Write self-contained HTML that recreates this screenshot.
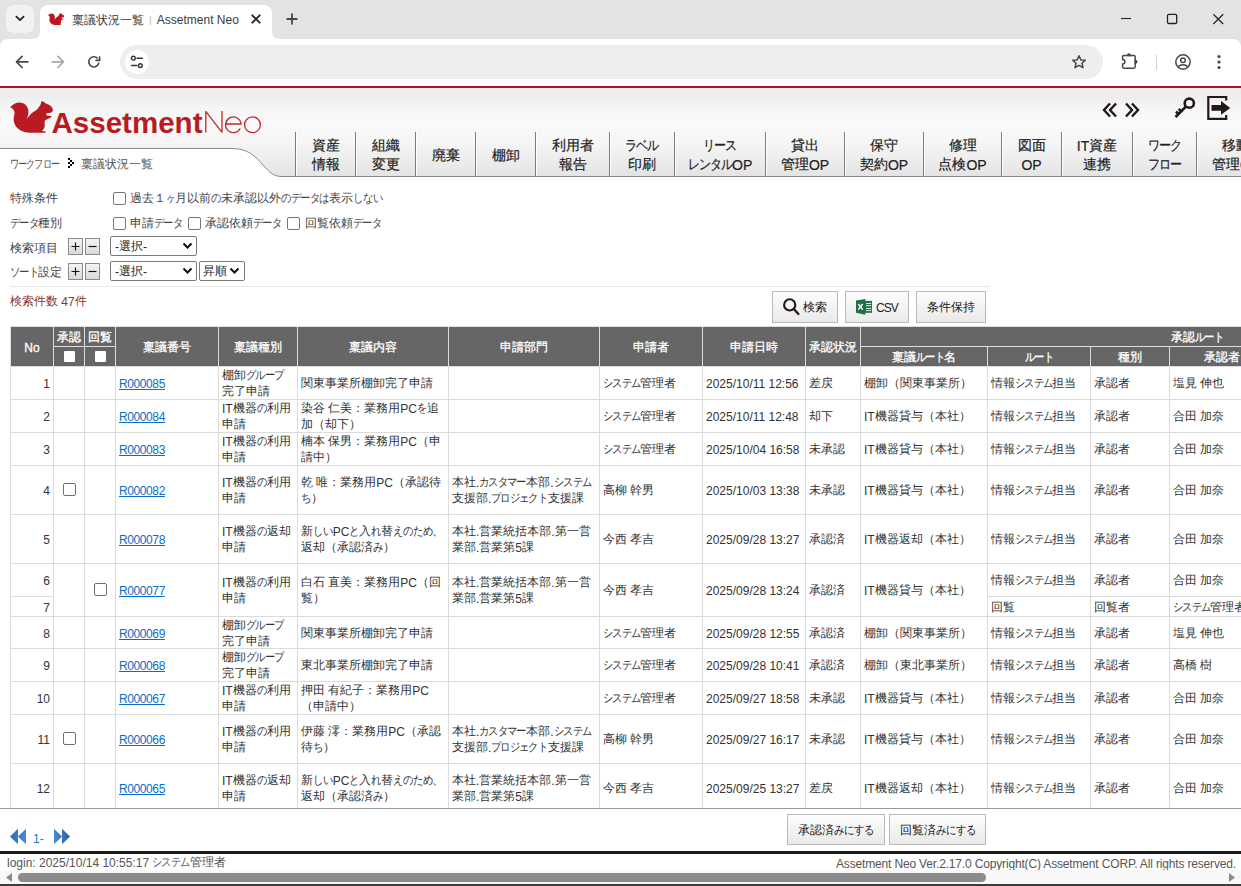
<!DOCTYPE html>
<html lang="ja"><head><meta charset="utf-8"><title>稟議状況一覧 | Assetment Neo</title>
<style>
html,body{margin:0;padding:0;width:1241px;height:886px;overflow:hidden;background:#fff;font-family:'Liberation Sans', sans-serif;}
.b,.t,.s,.clip{position:absolute;}
.clip{overflow:hidden;}
.t{white-space:nowrap;}
.a{position:relative;top:1px;}
.k{display:inline-block;transform-origin:0 50%;}
</style></head><body>
<div class="b" style="left:0px;top:0px;width:1241px;height:47px;background:#e3e3e3"></div>
<div class="b" style="left:6px;top:5px;width:28px;height:28px;background:#f2f2f2;border-radius:8px"></div>
<svg class="s" style="left:6px;top:5px;" width="28" height="28" viewBox="0 0 28 28"><path d="M10.4 11.6 L14 15.2 L17.6 11.6" fill="none" stroke="#1f1f1f" stroke-width="1.7" stroke-linecap="round" stroke-linejoin="round"/></svg>
<div class="b" style="left:0px;top:39px;width:1241px;height:47px;background:#fff;border-radius:8px 8px 0 0"></div>
<div class="b" style="left:40px;top:5px;width:232px;height:40px;background:#fff;border-radius:8px 8px 0 0"></div>
<svg class="s" style="left:32px;top:31px;" width="8" height="8" viewBox="0 0 8 8"><path d="M0 8 Q8 8 8 0 L8 8 Z" fill="#fff"/></svg>
<svg class="s" style="left:272px;top:31px;" width="8" height="8" viewBox="0 0 8 8"><path d="M8 8 Q0 8 0 0 L0 8 Z" fill="#fff"/></svg>
<svg class="s" style="left:46px;top:10px;" width="20" height="18" viewBox="0 0 20 18"><g transform="translate(2,3) scale(0.375) translate(-10,-101)"><path d="M10.1 107.3 C13 104.5 16 102.5 19.5 102.5 C24 102.5 27.5 105.5 28.3 110 C29 114 27.5 117 26.6 119.5 C28.3 117 30 115 31.3 113.6 C33.5 111.5 35.5 111 37 109.5 C38.5 108 39.5 106 40.6 104.5 L41.4 101.2 L43.8 101.8 L45.7 103.4 C48.5 104 51.5 105.8 52.6 108.5 C53.3 110.5 52.5 112.4 50.6 112.7 L46.3 113.2 L46.6 115.6 L51.9 116.2 C51 117.8 48 119 45.3 119.9 C44.3 121.5 44.5 123.5 44.8 125.3 C45 127.5 43.5 129.5 42.1 130.7 L45.7 131.8 L45.7 132.8 L29.5 132.8 C24 132.6 17.5 130 15 125 C13 121 13.5 117 14.5 114 C15 111 13.5 109 10.1 107.3 Z" fill="#c0151f"/></g></svg>
<div class="t" style="left:72px;top:12px;font-size:12px;line-height:16px;color:#3b3b3b;">稟議状況一覧 <span style="color:#c4c4c4;margin:0 1.5px;display:inline-block;transform:scaleY(.8)">|</span> Assetment Neo</div>
<svg class="s" style="left:250px;top:13px;" width="12" height="12" viewBox="0 0 12 12"><path d="M2.3 2.3 L9.7 9.7 M9.7 2.3 L2.3 9.7" stroke="#262626" stroke-width="1.9" stroke-linecap="round"/></svg>
<svg class="s" style="left:285px;top:12px;" width="14" height="14" viewBox="0 0 14 14"><path d="M7 2.2 V11.8 M2.2 7 H11.8" stroke="#474747" stroke-width="1.8" stroke-linecap="round"/></svg>
<svg class="s" style="left:1120px;top:12px;" width="13" height="13" viewBox="0 0 13 13"><path d="M1 6.5 H11" stroke="#222" stroke-width="1.1"/></svg>
<svg class="s" style="left:1166px;top:12px;" width="13" height="13" viewBox="0 0 13 13"><rect x="1.5" y="2.3" width="9.2" height="9.2" rx="1.3" fill="none" stroke="#222" stroke-width="1.3"/></svg>
<svg class="s" style="left:1212px;top:12px;" width="13" height="13" viewBox="0 0 13 13"><path d="M1.3 2.2 L11.2 12 M11.2 2.2 L1.3 12" stroke="#222" stroke-width="1.2"/></svg>
<svg class="s" style="left:14px;top:54px;" width="16" height="16" viewBox="0 0 16 16"><path d="M13.8 7.9 H2.6 M8.1 2.3 L2.5 7.9 L8.1 13.5" fill="none" stroke="#474747" stroke-width="1.7" stroke-linecap="round" stroke-linejoin="round"/></svg>
<svg class="s" style="left:50px;top:54px;" width="16" height="16" viewBox="0 0 16 16"><path d="M2.2 7.9 H13.4 M7.9 2.3 L13.5 7.9 L7.9 13.5" fill="none" stroke="#a9a9a9" stroke-width="1.7" stroke-linecap="round" stroke-linejoin="round"/></svg>
<svg class="s" style="left:86px;top:54px;" width="16" height="16" viewBox="0 0 16 16"><path d="M12.9 8.6 A5.1 5.1 0 1 1 11.7 4.5" fill="none" stroke="#474747" stroke-width="1.6"/><path d="M13.6 2.2 V6.4 H9.4" fill="none" stroke="#474747" stroke-width="1.6" stroke-linejoin="miter"/></svg>
<div class="b" style="left:120px;top:45px;width:983px;height:34px;background:#efedee;border-radius:17px"></div>
<div class="b" style="left:125px;top:50px;width:24px;height:24px;background:#fff;border-radius:12px"></div>
<svg class="s" style="left:125px;top:50px;" width="24" height="24" viewBox="0 0 24 24"><circle cx="8.3" cy="8.2" r="1.9" fill="none" stroke="#333" stroke-width="1.4"/><path d="M12 8.2 H17.3" stroke="#333" stroke-width="1.5" stroke-linecap="round"/><circle cx="15.3" cy="15.6" r="1.9" fill="none" stroke="#333" stroke-width="1.4"/><path d="M6.5 15.6 H11.7" stroke="#333" stroke-width="1.5" stroke-linecap="round"/></svg>
<svg class="s" style="left:1071px;top:54px;" width="16" height="16" viewBox="0 0 16 16"><path d="M8 1.8 L9.9 5.9 L14.3 6.3 L11 9.3 L12 13.7 L8 11.4 L4 13.7 L5 9.3 L1.7 6.3 L6.1 5.9 Z" fill="none" stroke="#474747" stroke-width="1.5" stroke-linejoin="round"/></svg>
<svg class="s" style="left:1120px;top:53px;" width="18" height="18" viewBox="0 0 18 18"><path d="M2.6 6.5 V4 Q2.6 2.6 4 2.6 H13.8 Q15.2 2.6 15.2 4 V13.8 Q15.2 15.2 13.8 15.2 H4 Q2.6 15.2 2.6 13.8 V11.1 A2.3 2.3 0 0 0 2.6 6.5 Z" fill="none" stroke="#474747" stroke-width="1.5"/><path d="M6.9 3.2 V2.4 A2.1 2.1 0 0 1 11.1 2.4 V3.2 Z M14.6 6.7 H15.4 A2.1 2.1 0 0 1 15.4 10.9 H14.6 Z" fill="#474747"/></svg>
<div class="b" style="left:1156px;top:55px;width:1px;height:15px;background:#d0d0d0"></div>
<svg class="s" style="left:1174px;top:53px;" width="18" height="18" viewBox="0 0 18 18"><circle cx="9" cy="9" r="7.2" fill="none" stroke="#474747" stroke-width="1.5"/><circle cx="9" cy="7.2" r="2.3" fill="none" stroke="#474747" stroke-width="1.5"/><path d="M4.3 13.8 C6.5 11 11.5 11 13.7 13.8" fill="none" stroke="#474747" stroke-width="1.5"/></svg>
<svg class="s" style="left:1215px;top:53px;" width="8" height="18" viewBox="0 0 8 18"><circle cx="4" cy="3.5" r="1.6" fill="#474747"/><circle cx="4" cy="9" r="1.6" fill="#474747"/><circle cx="4" cy="14.5" r="1.6" fill="#474747"/></svg>
<div class="b" style="left:0px;top:86px;width:1241px;height:2px;background:#b3141d"></div>
<div class="b" style="left:0px;top:88px;width:1241px;height:89px;background:linear-gradient(#f0f1ef 0px,#ebebeb 2px,#f5f5f5 20px,#fafafa 36px,#f5f5f5 56px,#eaeaea 78px,#e3e3e3 88px)"></div>
<svg class="s" style="left:0px;top:140px;" width="300" height="40" viewBox="0 0 300 40"><path d="M0 8.5 L232 8.5 C248 8.5 255 16 263 25 C270 33 274 36.5 282 36.5 L300 36.5 L300 40 L0 40 Z" fill="#fff"/><path d="M0 8.5 L232 8.5 C248 8.5 255 16 263 25 C270 33 274 36.5 282 36.5 L300 36.5" fill="none" stroke="#8a8a8a" stroke-width="1"/></svg>
<div class="b" style="left:280px;top:176px;width:961px;height:1px;background:#8a8a8a"></div>
<svg class="s" style="left:0px;top:95px;" width="270" height="45" viewBox="0 0 270 45"><g transform="translate(0,-95)"><path d="M10.1 107.3 C13 104.5 16 102.5 19.5 102.5 C24 102.5 27.5 105.5 28.3 110 C29 114 27.5 117 26.6 119.5 C28.3 117 30 115 31.3 113.6 C33.5 111.5 35.5 111 37 109.5 C38.5 108 39.5 106 40.6 104.5 L41.4 101.2 L43.8 101.8 L45.7 103.4 C48.5 104 51.5 105.8 52.6 108.5 C53.3 110.5 52.5 112.4 50.6 112.7 L46.3 113.2 L46.6 115.6 L51.9 116.2 C51 117.8 48 119 45.3 119.9 C44.3 121.5 44.5 123.5 44.8 125.3 C45 127.5 43.5 129.5 42.1 130.7 L45.7 131.8 L45.7 132.8 L29.5 132.8 C24 132.6 17.5 130 15 125 C13 121 13.5 117 14.5 114 C15 111 13.5 109 10.1 107.3 Z" fill="#b81c22"/></g>
<text x="51.5" y="37.6" font-family="Liberation Sans" font-weight="bold" font-size="29.5" fill="#b81c22" textLength="151" lengthAdjust="spacingAndGlyphs">Assetment</text>
<path d="M205.8 37.6 V16.3 L222 37.4 V16" fill="none" stroke="#c0282e" stroke-width="1.3" stroke-linejoin="bevel"/>
<path d="M225.7 29 H241.1 A7.8 7.8 0 1 0 240.2 33.5" fill="none" stroke="#c0282e" stroke-width="1.3"/>
<circle cx="252.5" cy="29.8" r="7.9" fill="none" stroke="#c0282e" stroke-width="1.3"/></svg>
<svg class="s" style="left:1100px;top:100px;" width="44" height="22" viewBox="0 0 44 22"><path d="M10 3.5 L4 10 L10 16.5 M16 3.5 L10 10 L16 16.5" fill="none" stroke="#231815" stroke-width="2.4"/><path d="M26 3.5 L32 10 L26 16.5 M32 3.5 L38 10 L32 16.5" fill="none" stroke="#231815" stroke-width="2.4"/></svg>
<svg class="s" style="left:1172px;top:96px;" width="26" height="24" viewBox="0 0 26 24"><circle cx="17.3" cy="7.2" r="4.6" fill="none" stroke="#231815" stroke-width="2.6"/><path d="M14 10.5 L3.5 21 M6.5 18 L4 15.5 M9.2 15.3 L6.7 12.8" fill="none" stroke="#231815" stroke-width="2.6"/></svg>
<svg class="s" style="left:1204px;top:94px;" width="30" height="28" viewBox="0 0 30 28"><path d="M22.2 6.5 V3 H4.3 V24.8 H22.2 V21" fill="none" stroke="#231815" stroke-width="2.2"/><path d="M7.5 11 H17 V7 L26.3 13.9 L17 20.8 V16.8 H7.5 Z" fill="#231815"/></svg>
<div class="b" style="left:295px;top:132px;width:1px;height:44px;background:#7c7c7c"></div>
<div class="b" style="left:296px;top:132px;width:1px;height:44px;background:#fff"></div>
<div class="t" style="left:265.5px;width:120px;text-align:center;top:136.3px;font-size:14px;line-height:18px;color:#222;-webkit-text-stroke:0.2px #222;">資産</div>
<div class="t" style="left:265.5px;width:120px;text-align:center;top:155.3px;font-size:14px;line-height:18px;color:#222;-webkit-text-stroke:0.2px #222;">情報</div>
<div class="b" style="left:355px;top:132px;width:1px;height:44px;background:#7c7c7c"></div>
<div class="b" style="left:356px;top:132px;width:1px;height:44px;background:#fff"></div>
<div class="t" style="left:325.5px;width:120px;text-align:center;top:136.3px;font-size:14px;line-height:18px;color:#222;-webkit-text-stroke:0.2px #222;">組織</div>
<div class="t" style="left:325.5px;width:120px;text-align:center;top:155.3px;font-size:14px;line-height:18px;color:#222;-webkit-text-stroke:0.2px #222;">変更</div>
<div class="b" style="left:415px;top:132px;width:1px;height:44px;background:#7c7c7c"></div>
<div class="b" style="left:416px;top:132px;width:1px;height:44px;background:#fff"></div>
<div class="t" style="left:385.5px;width:120px;text-align:center;top:146.3px;font-size:14px;line-height:18px;color:#222;-webkit-text-stroke:0.2px #222;">廃棄</div>
<div class="b" style="left:475px;top:132px;width:1px;height:44px;background:#7c7c7c"></div>
<div class="b" style="left:476px;top:132px;width:1px;height:44px;background:#fff"></div>
<div class="t" style="left:445.5px;width:120px;text-align:center;top:146.3px;font-size:14px;line-height:18px;color:#222;-webkit-text-stroke:0.2px #222;">棚卸</div>
<div class="b" style="left:535px;top:132px;width:1px;height:44px;background:#7c7c7c"></div>
<div class="b" style="left:536px;top:132px;width:1px;height:44px;background:#fff"></div>
<div class="t" style="left:512.5px;width:120px;text-align:center;top:136.3px;font-size:14px;line-height:18px;color:#222;-webkit-text-stroke:0.2px #222;">利用者</div>
<div class="t" style="left:512.5px;width:120px;text-align:center;top:155.3px;font-size:14px;line-height:18px;color:#222;-webkit-text-stroke:0.2px #222;">報告</div>
<div class="b" style="left:609px;top:132px;width:1px;height:44px;background:#7c7c7c"></div>
<div class="b" style="left:610px;top:132px;width:1px;height:44px;background:#fff"></div>
<div class="t" style="left:582.0px;width:120px;text-align:center;top:136.3px;font-size:14px;line-height:18px;color:#222;-webkit-text-stroke:0.2px #222;"><span class="k" style="transform:scaleX(0.860);letter-spacing:-0.081em;margin-right:-0.386em">ラベル</span></div>
<div class="t" style="left:582.0px;width:120px;text-align:center;top:155.3px;font-size:14px;line-height:18px;color:#222;-webkit-text-stroke:0.2px #222;">印刷</div>
<div class="b" style="left:674px;top:132px;width:1px;height:44px;background:#7c7c7c"></div>
<div class="b" style="left:675px;top:132px;width:1px;height:44px;background:#fff"></div>
<div class="t" style="left:660.0px;width:120px;text-align:center;top:136.3px;font-size:14px;line-height:18px;color:#222;-webkit-text-stroke:0.2px #222;"><span class="k" style="transform:scaleX(0.860);letter-spacing:-0.081em;margin-right:-0.386em">リース</span></div>
<div class="t" style="left:660.0px;width:120px;text-align:center;top:155.3px;font-size:14px;line-height:18px;color:#222;-webkit-text-stroke:0.2px #222;"><span class="k" style="transform:scaleX(0.860);letter-spacing:-0.081em;margin-right:-0.514em">レンタル</span><span class="a">OP</span></div>
<div class="b" style="left:765px;top:132px;width:1px;height:44px;background:#7c7c7c"></div>
<div class="b" style="left:766px;top:132px;width:1px;height:44px;background:#fff"></div>
<div class="t" style="left:745.0px;width:120px;text-align:center;top:136.3px;font-size:14px;line-height:18px;color:#222;-webkit-text-stroke:0.2px #222;">貸出</div>
<div class="t" style="left:745.0px;width:120px;text-align:center;top:155.3px;font-size:14px;line-height:18px;color:#222;-webkit-text-stroke:0.2px #222;">管理<span class="a">OP</span></div>
<div class="b" style="left:844px;top:132px;width:1px;height:44px;background:#7c7c7c"></div>
<div class="b" style="left:845px;top:132px;width:1px;height:44px;background:#fff"></div>
<div class="t" style="left:824.0px;width:120px;text-align:center;top:136.3px;font-size:14px;line-height:18px;color:#222;-webkit-text-stroke:0.2px #222;">保守</div>
<div class="t" style="left:824.0px;width:120px;text-align:center;top:155.3px;font-size:14px;line-height:18px;color:#222;-webkit-text-stroke:0.2px #222;">契約<span class="a">OP</span></div>
<div class="b" style="left:923px;top:132px;width:1px;height:44px;background:#7c7c7c"></div>
<div class="b" style="left:924px;top:132px;width:1px;height:44px;background:#fff"></div>
<div class="t" style="left:902.5px;width:120px;text-align:center;top:136.3px;font-size:14px;line-height:18px;color:#222;-webkit-text-stroke:0.2px #222;">修理</div>
<div class="t" style="left:902.5px;width:120px;text-align:center;top:155.3px;font-size:14px;line-height:18px;color:#222;-webkit-text-stroke:0.2px #222;">点検<span class="a">OP</span></div>
<div class="b" style="left:1001px;top:132px;width:1px;height:44px;background:#7c7c7c"></div>
<div class="b" style="left:1002px;top:132px;width:1px;height:44px;background:#fff"></div>
<div class="t" style="left:971.5px;width:120px;text-align:center;top:136.3px;font-size:14px;line-height:18px;color:#222;-webkit-text-stroke:0.2px #222;">図面</div>
<div class="t" style="left:971.5px;width:120px;text-align:center;top:155.3px;font-size:14px;line-height:18px;color:#222;-webkit-text-stroke:0.2px #222;"><span class="a">OP</span></div>
<div class="b" style="left:1061px;top:132px;width:1px;height:44px;background:#7c7c7c"></div>
<div class="b" style="left:1062px;top:132px;width:1px;height:44px;background:#fff"></div>
<div class="t" style="left:1037.0px;width:120px;text-align:center;top:136.3px;font-size:14px;line-height:18px;color:#222;-webkit-text-stroke:0.2px #222;"><span class="a">IT</span>資産</div>
<div class="t" style="left:1037.0px;width:120px;text-align:center;top:155.3px;font-size:14px;line-height:18px;color:#222;-webkit-text-stroke:0.2px #222;">連携</div>
<div class="b" style="left:1132px;top:132px;width:1px;height:44px;background:#7c7c7c"></div>
<div class="b" style="left:1133px;top:132px;width:1px;height:44px;background:#fff"></div>
<div class="t" style="left:1104.5px;width:120px;text-align:center;top:136.3px;font-size:14px;line-height:18px;color:#222;-webkit-text-stroke:0.2px #222;"><span class="k" style="transform:scaleX(0.860);letter-spacing:-0.081em;margin-right:-0.386em">ワーク</span></div>
<div class="t" style="left:1104.5px;width:120px;text-align:center;top:155.3px;font-size:14px;line-height:18px;color:#222;-webkit-text-stroke:0.2px #222;"><span class="k" style="transform:scaleX(0.860);letter-spacing:-0.081em;margin-right:-0.386em">フロー</span></div>
<div class="b" style="left:1196px;top:132px;width:1px;height:44px;background:#7c7c7c"></div>
<div class="b" style="left:1197px;top:132px;width:1px;height:44px;background:#fff"></div>
<div class="t" style="left:1176.0px;width:120px;text-align:center;top:136.3px;font-size:14px;line-height:18px;color:#222;-webkit-text-stroke:0.2px #222;">移動</div>
<div class="t" style="left:1176.0px;width:120px;text-align:center;top:155.3px;font-size:14px;line-height:18px;color:#222;-webkit-text-stroke:0.2px #222;">管理<span class="a">OP</span></div>
<div class="t" style="left:10px;top:155.8px;font-size:12px;line-height:16px;color:#555;"><span class="k" style="transform:scaleX(0.760);letter-spacing:-0.105em;margin-right:-1.288em">ワークフロー</span></div>
<svg class="s" style="left:68px;top:158px;" width="8" height="12" viewBox="0 0 8 12"><g fill="#000"><rect x="0" y="0" width="2" height="2"/><rect x="2" y="2" width="2" height="2"/><rect x="0" y="4" width="2" height="2"/><rect x="4" y="4" width="2" height="2"/><rect x="2" y="6" width="2" height="2"/><rect x="0" y="8" width="2" height="2"/></g></svg>
<div class="t" style="left:81px;top:155.8px;font-size:12px;line-height:16px;color:#555;">稟議状況一覧</div>
<div class="t" style="left:10px;top:190.3px;font-size:12px;line-height:16px;color:#444;">特殊条件</div>
<div class="b" style="left:113px;top:192px;width:11px;height:11px;background:#fff;border:1px solid #767676;border-radius:2px"></div>
<div class="t" style="left:130px;top:190.3px;font-size:12px;line-height:16px;color:#444;">過去１<span class="k" style="transform:scaleX(0.860);letter-spacing:-0.093em;margin-right:-0.127em">ヶ</span>月以前<span class="k" style="transform:scaleX(0.860);letter-spacing:-0.047em;margin-right:-0.133em">の</span>未承認以外<span class="k" style="transform:scaleX(0.860);letter-spacing:-0.047em;margin-right:-0.133em">の</span><span class="k" style="transform:scaleX(0.860);letter-spacing:-0.093em;margin-right:-0.381em">データ</span><span class="k" style="transform:scaleX(0.860);letter-spacing:-0.047em;margin-right:-0.133em">は</span>表示<span class="k" style="transform:scaleX(0.860);letter-spacing:-0.047em;margin-right:-0.400em">しない</span></div>
<div class="t" style="left:10px;top:215.3px;font-size:12px;line-height:16px;color:#444;"><span class="k" style="transform:scaleX(0.860);letter-spacing:-0.093em;margin-right:-0.381em">データ</span>種別</div>
<div class="b" style="left:113px;top:217px;width:11px;height:11px;background:#fff;border:1px solid #767676;border-radius:2px"></div>
<div class="t" style="left:130px;top:215.3px;font-size:12px;line-height:16px;color:#444;">申請<span class="k" style="transform:scaleX(0.860);letter-spacing:-0.093em;margin-right:-0.381em">データ</span></div>
<div class="b" style="left:188px;top:217px;width:11px;height:11px;background:#fff;border:1px solid #767676;border-radius:2px"></div>
<div class="t" style="left:205px;top:215.3px;font-size:12px;line-height:16px;color:#444;">承認依頼<span class="k" style="transform:scaleX(0.860);letter-spacing:-0.093em;margin-right:-0.381em">データ</span></div>
<div class="b" style="left:287px;top:217px;width:11px;height:11px;background:#fff;border:1px solid #767676;border-radius:2px"></div>
<div class="t" style="left:305px;top:215.3px;font-size:12px;line-height:16px;color:#444;">回覧依頼<span class="k" style="transform:scaleX(0.860);letter-spacing:-0.093em;margin-right:-0.381em">データ</span></div>
<div class="t" style="left:10px;top:240.3px;font-size:12px;line-height:16px;color:#444;">検索項目</div>
<div class="b" style="left:68px;top:238px;width:13px;height:15px;background:linear-gradient(#f4f4f4,#d9d9d9);border:1px solid #8a8a8a"></div>
<svg class="s" style="left:68px;top:238px;" width="15" height="17" viewBox="0 0 15 17"><path d="M7.5 4.5 V12.5 M3.5 8.5 H11.5" stroke="#111" stroke-width="1.15"/></svg>
<div class="b" style="left:85px;top:238px;width:13px;height:15px;background:linear-gradient(#f4f4f4,#d9d9d9);border:1px solid #8a8a8a"></div>
<svg class="s" style="left:85px;top:238px;" width="15" height="17" viewBox="0 0 15 17"><path d="M3.5 8.5 H11.5" stroke="#111" stroke-width="1.15"/></svg>
<div class="b" style="left:110px;top:236px;width:85px;height:18px;background:#fff;border:1px solid #7a7a7a;border-radius:2px"></div>
<div class="t" style="left:115px;top:238.3px;font-size:12px;line-height:16px;color:#222;"><span class="a">-</span>選択<span class="a">-</span></div>
<svg class="s" style="left:182px;top:241px;" width="11" height="10" viewBox="0 0 11 10"><path d="M1.5 2.5 L5.5 6.5 L9.5 2.5" fill="none" stroke="#111" stroke-width="2"/></svg>
<div class="t" style="left:10px;top:264.3px;font-size:12px;line-height:16px;color:#444;"><span class="k" style="transform:scaleX(0.860);letter-spacing:-0.093em;margin-right:-0.381em">ソート</span>設定</div>
<div class="b" style="left:68px;top:263px;width:13px;height:15px;background:linear-gradient(#f4f4f4,#d9d9d9);border:1px solid #8a8a8a"></div>
<svg class="s" style="left:68px;top:263px;" width="15" height="17" viewBox="0 0 15 17"><path d="M7.5 4.5 V12.5 M3.5 8.5 H11.5" stroke="#111" stroke-width="1.15"/></svg>
<div class="b" style="left:85px;top:263px;width:13px;height:15px;background:linear-gradient(#f4f4f4,#d9d9d9);border:1px solid #8a8a8a"></div>
<svg class="s" style="left:85px;top:263px;" width="15" height="17" viewBox="0 0 15 17"><path d="M3.5 8.5 H11.5" stroke="#111" stroke-width="1.15"/></svg>
<div class="b" style="left:110px;top:261px;width:85px;height:18px;background:#fff;border:1px solid #7a7a7a;border-radius:2px"></div>
<div class="t" style="left:115px;top:263.3px;font-size:12px;line-height:16px;color:#222;"><span class="a">-</span>選択<span class="a">-</span></div>
<svg class="s" style="left:182px;top:266px;" width="11" height="10" viewBox="0 0 11 10"><path d="M1.5 2.5 L5.5 6.5 L9.5 2.5" fill="none" stroke="#111" stroke-width="2"/></svg>
<div class="b" style="left:199px;top:261px;width:44px;height:18px;background:#fff;border:1px solid #7a7a7a;border-radius:2px"></div>
<div class="t" style="left:203px;top:263.3px;font-size:12px;line-height:16px;color:#222;">昇順</div>
<svg class="s" style="left:229px;top:266px;" width="11" height="10" viewBox="0 0 11 10"><path d="M1.5 2.5 L5.5 6.5 L9.5 2.5" fill="none" stroke="#111" stroke-width="2"/></svg>
<div class="b" style="left:10px;top:286px;width:980px;height:1px;background:#e8e8e8"></div>
<div class="t" style="left:10px;top:293.3px;font-size:12px;line-height:16px;color:#8c3434;">検索件数 <span class="a">47</span>件</div>
<div class="b" style="left:772px;top:291px;width:64px;height:30px;background:linear-gradient(#fdfdfd,#e9e9e9);border:1px solid #b9b9b9"></div>
<svg class="s" style="left:780px;top:296px;" width="22" height="22" viewBox="0 0 22 22"><circle cx="9.7" cy="8.9" r="5.6" fill="none" stroke="#231815" stroke-width="2.1"/><path d="M13.8 13 L18.4 18" stroke="#231815" stroke-width="2.3" stroke-linecap="round"/></svg>
<div class="t" style="left:803px;top:299.3px;font-size:12px;line-height:16px;color:#222;">検索</div>
<div class="b" style="left:845px;top:291px;width:62px;height:30px;background:linear-gradient(#fdfdfd,#e9e9e9);border:1px solid #b9b9b9"></div>
<svg class="s" style="left:855px;top:298px;" width="18" height="18" viewBox="0 0 18 18"><path d="M1 2.5 L10.4 1.1 V16.8 L1 14.8 Z" fill="#1e7145"/><rect x="10" y="2.9" width="7" height="11.9" fill="#1e7145"/><path d="M11 5.4 H16.2 M11 7.6 H16.2 M11 10.4 H16.2 M11 12.6 H16.2" stroke="#fff" stroke-width="0.9"/><path d="M3.3 6 L7.7 11.6 M7.7 6 L3.3 11.6" stroke="#fff" stroke-width="1.5"/></svg>
<div class="t" style="left:876px;top:298.8px;font-size:12px;line-height:16px;color:#222;letter-spacing:-0.9px;"><span class="a">CSV</span></div>
<div class="b" style="left:916px;top:291px;width:68px;height:30px;background:linear-gradient(#fdfdfd,#e9e9e9);border:1px solid #b9b9b9"></div>
<div class="t" style="left:916.0px;width:70px;text-align:center;top:299.3px;font-size:12px;line-height:16px;color:#222;">条件保持</div>
<div class="clip" style="left:0;top:326px;width:1241px;height:482px">
<div class="b" style="left:11px;top:1px;width:1241px;height:39px;background:#666"></div>
<div class="b" style="left:10px;top:0px;width:1241px;height:1px;background:#dcdcdc"></div>
<div class="b" style="left:10px;top:40px;width:1241px;height:1px;background:#dcdcdc"></div>
<div class="b" style="left:53px;top:20px;width:62px;height:1px;background:#dcdcdc"></div>
<div class="b" style="left:860px;top:20px;width:500px;height:1px;background:#dcdcdc"></div>
<div class="b" style="left:10px;top:0px;width:1px;height:40px;background:#dcdcdc"></div>
<div class="b" style="left:53px;top:0px;width:1px;height:40px;background:#dcdcdc"></div>
<div class="b" style="left:84px;top:0px;width:1px;height:40px;background:#dcdcdc"></div>
<div class="b" style="left:115px;top:0px;width:1px;height:40px;background:#dcdcdc"></div>
<div class="b" style="left:218px;top:0px;width:1px;height:40px;background:#dcdcdc"></div>
<div class="b" style="left:297px;top:0px;width:1px;height:40px;background:#dcdcdc"></div>
<div class="b" style="left:448px;top:0px;width:1px;height:40px;background:#dcdcdc"></div>
<div class="b" style="left:599px;top:0px;width:1px;height:40px;background:#dcdcdc"></div>
<div class="b" style="left:702px;top:0px;width:1px;height:40px;background:#dcdcdc"></div>
<div class="b" style="left:805px;top:0px;width:1px;height:40px;background:#dcdcdc"></div>
<div class="b" style="left:860px;top:0px;width:1px;height:40px;background:#dcdcdc"></div>
<div class="b" style="left:987px;top:20px;width:1px;height:20px;background:#dcdcdc"></div>
<div class="b" style="left:1090px;top:20px;width:1px;height:20px;background:#dcdcdc"></div>
<div class="b" style="left:1169px;top:20px;width:1px;height:20px;background:#dcdcdc"></div>
<div class="b" style="left:1273px;top:20px;width:1px;height:20px;background:#dcdcdc"></div>
<div class="t" style="left:-48.0px;width:160px;text-align:center;top:12.8px;font-size:12px;line-height:16px;color:#fff;-webkit-text-stroke:0.3px #fff;"><span class="a">No</span></div>
<div class="t" style="left:-11.0px;width:160px;text-align:center;top:2.8px;font-size:12px;line-height:16px;color:#fff;-webkit-text-stroke:0.3px #fff;">承認</div>
<div class="t" style="left:20.0px;width:160px;text-align:center;top:2.8px;font-size:12px;line-height:16px;color:#fff;-webkit-text-stroke:0.3px #fff;">回覧</div>
<div class="b" style="left:64px;top:25px;width:11px;height:11px;background:#fff;border-radius:1px"></div>
<div class="b" style="left:95px;top:25px;width:11px;height:11px;background:#fff;border-radius:1px"></div>
<div class="t" style="left:87.0px;width:160px;text-align:center;top:12.8px;font-size:12px;line-height:16px;color:#fff;-webkit-text-stroke:0.3px #fff;">稟議番号</div>
<div class="t" style="left:178.0px;width:160px;text-align:center;top:12.8px;font-size:12px;line-height:16px;color:#fff;-webkit-text-stroke:0.3px #fff;">稟議種別</div>
<div class="t" style="left:293.0px;width:160px;text-align:center;top:12.8px;font-size:12px;line-height:16px;color:#fff;-webkit-text-stroke:0.3px #fff;">稟議内容</div>
<div class="t" style="left:444.0px;width:160px;text-align:center;top:12.8px;font-size:12px;line-height:16px;color:#fff;-webkit-text-stroke:0.3px #fff;">申請部門</div>
<div class="t" style="left:571.0px;width:160px;text-align:center;top:12.8px;font-size:12px;line-height:16px;color:#fff;-webkit-text-stroke:0.3px #fff;">申請者</div>
<div class="t" style="left:674.0px;width:160px;text-align:center;top:12.8px;font-size:12px;line-height:16px;color:#fff;-webkit-text-stroke:0.3px #fff;">申請日時</div>
<div class="t" style="left:753.0px;width:160px;text-align:center;top:12.8px;font-size:12px;line-height:16px;color:#fff;-webkit-text-stroke:0.3px #fff;">承認状況</div>
<div class="t" style="left:1117.0px;width:160px;text-align:center;top:2.8px;font-size:12px;line-height:16px;color:#fff;-webkit-text-stroke:0.3px #fff;">承認<span class="k" style="transform:scaleX(0.860);letter-spacing:-0.093em;margin-right:-0.381em">ルート</span></div>
<div class="t" style="left:844.0px;width:160px;text-align:center;top:22.8px;font-size:12px;line-height:16px;color:#fff;-webkit-text-stroke:0.3px #fff;">稟議<span class="k" style="transform:scaleX(0.860);letter-spacing:-0.093em;margin-right:-0.381em">ルート</span>名</div>
<div class="t" style="left:959.0px;width:160px;text-align:center;top:22.8px;font-size:12px;line-height:16px;color:#fff;-webkit-text-stroke:0.3px #fff;"><span class="k" style="transform:scaleX(0.860);letter-spacing:-0.093em;margin-right:-0.381em">ルート</span></div>
<div class="t" style="left:1050.0px;width:160px;text-align:center;top:22.8px;font-size:12px;line-height:16px;color:#fff;-webkit-text-stroke:0.3px #fff;">種別</div>
<div class="t" style="left:1141.5px;width:160px;text-align:center;top:22.8px;font-size:12px;line-height:16px;color:#fff;-webkit-text-stroke:0.3px #fff;">承認者</div>
<div class="b" style="left:10px;top:73px;width:1241px;height:1px;background:#dcdcdc"></div>
<div class="b" style="left:10px;top:40px;width:1px;height:33px;background:#dcdcdc"></div>
<div class="b" style="left:53px;top:40px;width:1px;height:33px;background:#dcdcdc"></div>
<div class="b" style="left:84px;top:40px;width:1px;height:33px;background:#dcdcdc"></div>
<div class="b" style="left:115px;top:40px;width:1px;height:33px;background:#dcdcdc"></div>
<div class="b" style="left:218px;top:40px;width:1px;height:33px;background:#dcdcdc"></div>
<div class="b" style="left:297px;top:40px;width:1px;height:33px;background:#dcdcdc"></div>
<div class="b" style="left:448px;top:40px;width:1px;height:33px;background:#dcdcdc"></div>
<div class="b" style="left:599px;top:40px;width:1px;height:33px;background:#dcdcdc"></div>
<div class="b" style="left:702px;top:40px;width:1px;height:33px;background:#dcdcdc"></div>
<div class="b" style="left:805px;top:40px;width:1px;height:33px;background:#dcdcdc"></div>
<div class="b" style="left:860px;top:40px;width:1px;height:33px;background:#dcdcdc"></div>
<div class="b" style="left:987px;top:40px;width:1px;height:33px;background:#dcdcdc"></div>
<div class="b" style="left:1090px;top:40px;width:1px;height:33px;background:#dcdcdc"></div>
<div class="b" style="left:1169px;top:40px;width:1px;height:33px;background:#dcdcdc"></div>
<div class="b" style="left:1273px;top:40px;width:1px;height:33px;background:#dcdcdc"></div>
<div class="t" style="right:1191px;top:49.3px;font-size:12px;line-height:16px;color:#333;"><span class="a">1</span></div>
<div class="t" style="left:119px;top:50.3px;font-size:12px;line-height:16px;color:#0b6dc6;text-decoration:underline;letter-spacing:-0.4px;">R000085</div>
<div class="t" style="left:222px;top:41.3px;font-size:12px;line-height:16px;color:#333;">棚卸<span class="k" style="transform:scaleX(0.860);letter-spacing:-0.093em;margin-right:-0.508em">グループ</span></div>
<div class="t" style="left:222px;top:57.3px;font-size:12px;line-height:16px;color:#333;">完了申請</div>
<div class="t" style="left:301px;top:49.3px;font-size:12px;line-height:16px;color:#333;">関東事業所棚卸完了申請</div>
<div class="t" style="left:603px;top:49.3px;font-size:12px;line-height:16px;color:#333;"><span class="k" style="transform:scaleX(0.860);letter-spacing:-0.093em;margin-right:-0.508em">システム</span>管理者</div>
<div class="t" style="left:706px;top:49.3px;font-size:12px;line-height:16px;color:#333;"><span class="a">2025/10/11 12:56</span></div>
<div class="t" style="left:809px;top:49.3px;font-size:12px;line-height:16px;color:#333;">差戻</div>
<div class="t" style="left:864px;top:49.3px;font-size:12px;line-height:16px;color:#333;">棚卸（関東事業所）</div>
<div class="t" style="left:991px;top:49.3px;font-size:12px;line-height:16px;color:#333;">情報<span class="k" style="transform:scaleX(0.860);letter-spacing:-0.093em;margin-right:-0.508em">システム</span>担当</div>
<div class="t" style="left:1094px;top:49.3px;font-size:12px;line-height:16px;color:#333;">承認者</div>
<div class="t" style="left:1173px;top:49.3px;font-size:12px;line-height:16px;color:#333;">塩見 伸也</div>
<div class="b" style="left:10px;top:106px;width:1241px;height:1px;background:#dcdcdc"></div>
<div class="b" style="left:10px;top:73px;width:1px;height:33px;background:#dcdcdc"></div>
<div class="b" style="left:53px;top:73px;width:1px;height:33px;background:#dcdcdc"></div>
<div class="b" style="left:84px;top:73px;width:1px;height:33px;background:#dcdcdc"></div>
<div class="b" style="left:115px;top:73px;width:1px;height:33px;background:#dcdcdc"></div>
<div class="b" style="left:218px;top:73px;width:1px;height:33px;background:#dcdcdc"></div>
<div class="b" style="left:297px;top:73px;width:1px;height:33px;background:#dcdcdc"></div>
<div class="b" style="left:448px;top:73px;width:1px;height:33px;background:#dcdcdc"></div>
<div class="b" style="left:599px;top:73px;width:1px;height:33px;background:#dcdcdc"></div>
<div class="b" style="left:702px;top:73px;width:1px;height:33px;background:#dcdcdc"></div>
<div class="b" style="left:805px;top:73px;width:1px;height:33px;background:#dcdcdc"></div>
<div class="b" style="left:860px;top:73px;width:1px;height:33px;background:#dcdcdc"></div>
<div class="b" style="left:987px;top:73px;width:1px;height:33px;background:#dcdcdc"></div>
<div class="b" style="left:1090px;top:73px;width:1px;height:33px;background:#dcdcdc"></div>
<div class="b" style="left:1169px;top:73px;width:1px;height:33px;background:#dcdcdc"></div>
<div class="b" style="left:1273px;top:73px;width:1px;height:33px;background:#dcdcdc"></div>
<div class="t" style="right:1191px;top:82.3px;font-size:12px;line-height:16px;color:#333;"><span class="a">2</span></div>
<div class="t" style="left:119px;top:83.3px;font-size:12px;line-height:16px;color:#0b6dc6;text-decoration:underline;letter-spacing:-0.4px;">R000084</div>
<div class="t" style="left:222px;top:74.3px;font-size:12px;line-height:16px;color:#333;"><span class="a">IT</span>機器<span class="k" style="transform:scaleX(0.860);letter-spacing:-0.047em;margin-right:-0.133em">の</span>利用</div>
<div class="t" style="left:222px;top:90.3px;font-size:12px;line-height:16px;color:#333;">申請</div>
<div class="t" style="left:301px;top:74.3px;font-size:12px;line-height:16px;color:#333;">染谷 仁美：業務用<span class="a">PC</span><span class="k" style="transform:scaleX(0.860);letter-spacing:-0.047em;margin-right:-0.133em">を</span>追</div>
<div class="t" style="left:301px;top:90.3px;font-size:12px;line-height:16px;color:#333;">加（却下）</div>
<div class="t" style="left:603px;top:82.3px;font-size:12px;line-height:16px;color:#333;"><span class="k" style="transform:scaleX(0.860);letter-spacing:-0.093em;margin-right:-0.508em">システム</span>管理者</div>
<div class="t" style="left:706px;top:82.3px;font-size:12px;line-height:16px;color:#333;"><span class="a">2025/10/11 12:48</span></div>
<div class="t" style="left:809px;top:82.3px;font-size:12px;line-height:16px;color:#333;">却下</div>
<div class="t" style="left:864px;top:82.3px;font-size:12px;line-height:16px;color:#333;"><span class="a">IT</span>機器貸与（本社）</div>
<div class="t" style="left:991px;top:82.3px;font-size:12px;line-height:16px;color:#333;">情報<span class="k" style="transform:scaleX(0.860);letter-spacing:-0.093em;margin-right:-0.508em">システム</span>担当</div>
<div class="t" style="left:1094px;top:82.3px;font-size:12px;line-height:16px;color:#333;">承認者</div>
<div class="t" style="left:1173px;top:82.3px;font-size:12px;line-height:16px;color:#333;">合田 加奈</div>
<div class="b" style="left:10px;top:139px;width:1241px;height:1px;background:#dcdcdc"></div>
<div class="b" style="left:10px;top:106px;width:1px;height:33px;background:#dcdcdc"></div>
<div class="b" style="left:53px;top:106px;width:1px;height:33px;background:#dcdcdc"></div>
<div class="b" style="left:84px;top:106px;width:1px;height:33px;background:#dcdcdc"></div>
<div class="b" style="left:115px;top:106px;width:1px;height:33px;background:#dcdcdc"></div>
<div class="b" style="left:218px;top:106px;width:1px;height:33px;background:#dcdcdc"></div>
<div class="b" style="left:297px;top:106px;width:1px;height:33px;background:#dcdcdc"></div>
<div class="b" style="left:448px;top:106px;width:1px;height:33px;background:#dcdcdc"></div>
<div class="b" style="left:599px;top:106px;width:1px;height:33px;background:#dcdcdc"></div>
<div class="b" style="left:702px;top:106px;width:1px;height:33px;background:#dcdcdc"></div>
<div class="b" style="left:805px;top:106px;width:1px;height:33px;background:#dcdcdc"></div>
<div class="b" style="left:860px;top:106px;width:1px;height:33px;background:#dcdcdc"></div>
<div class="b" style="left:987px;top:106px;width:1px;height:33px;background:#dcdcdc"></div>
<div class="b" style="left:1090px;top:106px;width:1px;height:33px;background:#dcdcdc"></div>
<div class="b" style="left:1169px;top:106px;width:1px;height:33px;background:#dcdcdc"></div>
<div class="b" style="left:1273px;top:106px;width:1px;height:33px;background:#dcdcdc"></div>
<div class="t" style="right:1191px;top:115.3px;font-size:12px;line-height:16px;color:#333;"><span class="a">3</span></div>
<div class="t" style="left:119px;top:116.3px;font-size:12px;line-height:16px;color:#0b6dc6;text-decoration:underline;letter-spacing:-0.4px;">R000083</div>
<div class="t" style="left:222px;top:107.3px;font-size:12px;line-height:16px;color:#333;"><span class="a">IT</span>機器<span class="k" style="transform:scaleX(0.860);letter-spacing:-0.047em;margin-right:-0.133em">の</span>利用</div>
<div class="t" style="left:222px;top:123.3px;font-size:12px;line-height:16px;color:#333;">申請</div>
<div class="t" style="left:301px;top:107.3px;font-size:12px;line-height:16px;color:#333;">楠本 保男：業務用<span class="a">PC</span>（申</div>
<div class="t" style="left:301px;top:123.3px;font-size:12px;line-height:16px;color:#333;">請中）</div>
<div class="t" style="left:603px;top:115.3px;font-size:12px;line-height:16px;color:#333;"><span class="k" style="transform:scaleX(0.860);letter-spacing:-0.093em;margin-right:-0.508em">システム</span>管理者</div>
<div class="t" style="left:706px;top:115.3px;font-size:12px;line-height:16px;color:#333;"><span class="a">2025/10/04 16:58</span></div>
<div class="t" style="left:809px;top:115.3px;font-size:12px;line-height:16px;color:#333;">未承認</div>
<div class="t" style="left:864px;top:115.3px;font-size:12px;line-height:16px;color:#333;"><span class="a">IT</span>機器貸与（本社）</div>
<div class="t" style="left:991px;top:115.3px;font-size:12px;line-height:16px;color:#333;">情報<span class="k" style="transform:scaleX(0.860);letter-spacing:-0.093em;margin-right:-0.508em">システム</span>担当</div>
<div class="t" style="left:1094px;top:115.3px;font-size:12px;line-height:16px;color:#333;">承認者</div>
<div class="t" style="left:1173px;top:115.3px;font-size:12px;line-height:16px;color:#333;">合田 加奈</div>
<div class="b" style="left:10px;top:188px;width:1241px;height:1px;background:#dcdcdc"></div>
<div class="b" style="left:10px;top:139px;width:1px;height:49px;background:#dcdcdc"></div>
<div class="b" style="left:53px;top:139px;width:1px;height:49px;background:#dcdcdc"></div>
<div class="b" style="left:84px;top:139px;width:1px;height:49px;background:#dcdcdc"></div>
<div class="b" style="left:115px;top:139px;width:1px;height:49px;background:#dcdcdc"></div>
<div class="b" style="left:218px;top:139px;width:1px;height:49px;background:#dcdcdc"></div>
<div class="b" style="left:297px;top:139px;width:1px;height:49px;background:#dcdcdc"></div>
<div class="b" style="left:448px;top:139px;width:1px;height:49px;background:#dcdcdc"></div>
<div class="b" style="left:599px;top:139px;width:1px;height:49px;background:#dcdcdc"></div>
<div class="b" style="left:702px;top:139px;width:1px;height:49px;background:#dcdcdc"></div>
<div class="b" style="left:805px;top:139px;width:1px;height:49px;background:#dcdcdc"></div>
<div class="b" style="left:860px;top:139px;width:1px;height:49px;background:#dcdcdc"></div>
<div class="b" style="left:987px;top:139px;width:1px;height:49px;background:#dcdcdc"></div>
<div class="b" style="left:1090px;top:139px;width:1px;height:49px;background:#dcdcdc"></div>
<div class="b" style="left:1169px;top:139px;width:1px;height:49px;background:#dcdcdc"></div>
<div class="b" style="left:1273px;top:139px;width:1px;height:49px;background:#dcdcdc"></div>
<div class="t" style="right:1191px;top:156.3px;font-size:12px;line-height:16px;color:#333;"><span class="a">4</span></div>
<div class="b" style="left:63px;top:157px;width:11px;height:11px;background:#fff;border:1px solid #6f6f6f;border-radius:2px"></div>
<div class="t" style="left:119px;top:157.3px;font-size:12px;line-height:16px;color:#0b6dc6;text-decoration:underline;letter-spacing:-0.4px;">R000082</div>
<div class="t" style="left:222px;top:148.3px;font-size:12px;line-height:16px;color:#333;"><span class="a">IT</span>機器<span class="k" style="transform:scaleX(0.860);letter-spacing:-0.047em;margin-right:-0.133em">の</span>利用</div>
<div class="t" style="left:222px;top:164.3px;font-size:12px;line-height:16px;color:#333;">申請</div>
<div class="t" style="left:301px;top:148.3px;font-size:12px;line-height:16px;color:#333;">乾 唯：業務用<span class="a">PC</span>（承認待</div>
<div class="t" style="left:301px;top:164.3px;font-size:12px;line-height:16px;color:#333;"><span class="k" style="transform:scaleX(0.860);letter-spacing:-0.047em;margin-right:-0.133em">ち</span>）</div>
<div class="t" style="left:452px;top:148.3px;font-size:12px;line-height:16px;color:#333;">本社<span class="a">.</span><span class="k" style="transform:scaleX(0.860);letter-spacing:-0.093em;margin-right:-0.635em">カスタマー</span>本部<span class="a">.</span><span class="k" style="transform:scaleX(0.860);letter-spacing:-0.093em;margin-right:-0.508em">システム</span></div>
<div class="t" style="left:452px;top:164.3px;font-size:12px;line-height:16px;color:#333;">支援部<span class="a">.</span><span class="k" style="transform:scaleX(0.860);letter-spacing:-0.093em;margin-right:-0.762em">プロジェクト</span>支援課</div>
<div class="t" style="left:603px;top:156.3px;font-size:12px;line-height:16px;color:#333;">高柳 幹男</div>
<div class="t" style="left:706px;top:156.3px;font-size:12px;line-height:16px;color:#333;"><span class="a">2025/10/03 13:38</span></div>
<div class="t" style="left:809px;top:156.3px;font-size:12px;line-height:16px;color:#333;">未承認</div>
<div class="t" style="left:864px;top:156.3px;font-size:12px;line-height:16px;color:#333;"><span class="a">IT</span>機器貸与（本社）</div>
<div class="t" style="left:991px;top:156.3px;font-size:12px;line-height:16px;color:#333;">情報<span class="k" style="transform:scaleX(0.860);letter-spacing:-0.093em;margin-right:-0.508em">システム</span>担当</div>
<div class="t" style="left:1094px;top:156.3px;font-size:12px;line-height:16px;color:#333;">承認者</div>
<div class="t" style="left:1173px;top:156.3px;font-size:12px;line-height:16px;color:#333;">合田 加奈</div>
<div class="b" style="left:10px;top:237px;width:1241px;height:1px;background:#dcdcdc"></div>
<div class="b" style="left:10px;top:188px;width:1px;height:49px;background:#dcdcdc"></div>
<div class="b" style="left:53px;top:188px;width:1px;height:49px;background:#dcdcdc"></div>
<div class="b" style="left:84px;top:188px;width:1px;height:49px;background:#dcdcdc"></div>
<div class="b" style="left:115px;top:188px;width:1px;height:49px;background:#dcdcdc"></div>
<div class="b" style="left:218px;top:188px;width:1px;height:49px;background:#dcdcdc"></div>
<div class="b" style="left:297px;top:188px;width:1px;height:49px;background:#dcdcdc"></div>
<div class="b" style="left:448px;top:188px;width:1px;height:49px;background:#dcdcdc"></div>
<div class="b" style="left:599px;top:188px;width:1px;height:49px;background:#dcdcdc"></div>
<div class="b" style="left:702px;top:188px;width:1px;height:49px;background:#dcdcdc"></div>
<div class="b" style="left:805px;top:188px;width:1px;height:49px;background:#dcdcdc"></div>
<div class="b" style="left:860px;top:188px;width:1px;height:49px;background:#dcdcdc"></div>
<div class="b" style="left:987px;top:188px;width:1px;height:49px;background:#dcdcdc"></div>
<div class="b" style="left:1090px;top:188px;width:1px;height:49px;background:#dcdcdc"></div>
<div class="b" style="left:1169px;top:188px;width:1px;height:49px;background:#dcdcdc"></div>
<div class="b" style="left:1273px;top:188px;width:1px;height:49px;background:#dcdcdc"></div>
<div class="t" style="right:1191px;top:205.3px;font-size:12px;line-height:16px;color:#333;"><span class="a">5</span></div>
<div class="t" style="left:119px;top:206.3px;font-size:12px;line-height:16px;color:#0b6dc6;text-decoration:underline;letter-spacing:-0.4px;">R000078</div>
<div class="t" style="left:222px;top:197.3px;font-size:12px;line-height:16px;color:#333;"><span class="a">IT</span>機器<span class="k" style="transform:scaleX(0.860);letter-spacing:-0.047em;margin-right:-0.133em">の</span>返却</div>
<div class="t" style="left:222px;top:213.3px;font-size:12px;line-height:16px;color:#333;">申請</div>
<div class="t" style="left:301px;top:197.3px;font-size:12px;line-height:16px;color:#333;">新<span class="k" style="transform:scaleX(0.860);letter-spacing:-0.047em;margin-right:-0.267em">しい</span><span class="a">PC</span><span class="k" style="transform:scaleX(0.860);letter-spacing:-0.047em;margin-right:-0.133em">と</span>入<span class="k" style="transform:scaleX(0.860);letter-spacing:-0.047em;margin-right:-0.133em">れ</span>替<span class="k" style="transform:scaleX(0.860);letter-spacing:-0.047em;margin-right:-0.534em">えのため</span>、</div>
<div class="t" style="left:301px;top:213.3px;font-size:12px;line-height:16px;color:#333;">返却（承認済<span class="k" style="transform:scaleX(0.860);letter-spacing:-0.047em;margin-right:-0.133em">み</span>）</div>
<div class="t" style="left:452px;top:197.3px;font-size:12px;line-height:16px;color:#333;">本社<span class="a">.</span>営業統括本部<span class="a">.</span>第一営</div>
<div class="t" style="left:452px;top:213.3px;font-size:12px;line-height:16px;color:#333;">業部<span class="a">.</span>営業第<span class="a">5</span>課</div>
<div class="t" style="left:603px;top:205.3px;font-size:12px;line-height:16px;color:#333;">今西 孝吉</div>
<div class="t" style="left:706px;top:205.3px;font-size:12px;line-height:16px;color:#333;"><span class="a">2025/09/28 13:27</span></div>
<div class="t" style="left:809px;top:205.3px;font-size:12px;line-height:16px;color:#333;">承認済</div>
<div class="t" style="left:864px;top:205.3px;font-size:12px;line-height:16px;color:#333;"><span class="a">IT</span>機器返却（本社）</div>
<div class="t" style="left:991px;top:205.3px;font-size:12px;line-height:16px;color:#333;">情報<span class="k" style="transform:scaleX(0.860);letter-spacing:-0.093em;margin-right:-0.508em">システム</span>担当</div>
<div class="t" style="left:1094px;top:205.3px;font-size:12px;line-height:16px;color:#333;">承認者</div>
<div class="t" style="left:1173px;top:205.3px;font-size:12px;line-height:16px;color:#333;">合田 加奈</div>
<div class="b" style="left:10px;top:290px;width:1241px;height:1px;background:#dcdcdc"></div>
<div class="b" style="left:10px;top:237px;width:1px;height:53px;background:#dcdcdc"></div>
<div class="b" style="left:53px;top:237px;width:1px;height:53px;background:#dcdcdc"></div>
<div class="b" style="left:84px;top:237px;width:1px;height:53px;background:#dcdcdc"></div>
<div class="b" style="left:115px;top:237px;width:1px;height:53px;background:#dcdcdc"></div>
<div class="b" style="left:218px;top:237px;width:1px;height:53px;background:#dcdcdc"></div>
<div class="b" style="left:297px;top:237px;width:1px;height:53px;background:#dcdcdc"></div>
<div class="b" style="left:448px;top:237px;width:1px;height:53px;background:#dcdcdc"></div>
<div class="b" style="left:599px;top:237px;width:1px;height:53px;background:#dcdcdc"></div>
<div class="b" style="left:702px;top:237px;width:1px;height:53px;background:#dcdcdc"></div>
<div class="b" style="left:805px;top:237px;width:1px;height:53px;background:#dcdcdc"></div>
<div class="b" style="left:860px;top:237px;width:1px;height:53px;background:#dcdcdc"></div>
<div class="b" style="left:987px;top:237px;width:1px;height:53px;background:#dcdcdc"></div>
<div class="b" style="left:1090px;top:237px;width:1px;height:53px;background:#dcdcdc"></div>
<div class="b" style="left:1169px;top:237px;width:1px;height:53px;background:#dcdcdc"></div>
<div class="b" style="left:1273px;top:237px;width:1px;height:53px;background:#dcdcdc"></div>
<div class="b" style="left:10px;top:270px;width:43px;height:1px;background:#dcdcdc"></div>
<div class="b" style="left:987px;top:270px;width:300px;height:1px;background:#dcdcdc"></div>
<div class="t" style="right:1191px;top:246.3px;font-size:12px;line-height:16px;color:#333;"><span class="a">6</span></div>
<div class="t" style="right:1191px;top:272.8px;font-size:12px;line-height:16px;color:#333;"><span class="a">7</span></div>
<div class="t" style="left:991px;top:246.3px;font-size:12px;line-height:16px;color:#333;">情報<span class="k" style="transform:scaleX(0.860);letter-spacing:-0.093em;margin-right:-0.508em">システム</span>担当</div>
<div class="t" style="left:991px;top:272.8px;font-size:12px;line-height:16px;color:#333;">回覧</div>
<div class="t" style="left:1094px;top:246.3px;font-size:12px;line-height:16px;color:#333;">承認者</div>
<div class="t" style="left:1094px;top:272.8px;font-size:12px;line-height:16px;color:#333;">回覧者</div>
<div class="t" style="left:1173px;top:246.3px;font-size:12px;line-height:16px;color:#333;">合田 加奈</div>
<div class="t" style="left:1173px;top:272.8px;font-size:12px;line-height:16px;color:#333;"><span class="k" style="transform:scaleX(0.860);letter-spacing:-0.093em;margin-right:-0.508em">システム</span>管理者</div>
<div class="b" style="left:94px;top:257px;width:11px;height:11px;background:#fff;border:1px solid #6f6f6f;border-radius:2px"></div>
<div class="t" style="left:119px;top:257.3px;font-size:12px;line-height:16px;color:#0b6dc6;text-decoration:underline;letter-spacing:-0.4px;">R000077</div>
<div class="t" style="left:222px;top:248.3px;font-size:12px;line-height:16px;color:#333;"><span class="a">IT</span>機器<span class="k" style="transform:scaleX(0.860);letter-spacing:-0.047em;margin-right:-0.133em">の</span>利用</div>
<div class="t" style="left:222px;top:264.3px;font-size:12px;line-height:16px;color:#333;">申請</div>
<div class="t" style="left:301px;top:248.3px;font-size:12px;line-height:16px;color:#333;">白石 直美：業務用<span class="a">PC</span>（回</div>
<div class="t" style="left:301px;top:264.3px;font-size:12px;line-height:16px;color:#333;">覧）</div>
<div class="t" style="left:452px;top:248.3px;font-size:12px;line-height:16px;color:#333;">本社<span class="a">.</span>営業統括本部<span class="a">.</span>第一営</div>
<div class="t" style="left:452px;top:264.3px;font-size:12px;line-height:16px;color:#333;">業部<span class="a">.</span>営業第<span class="a">5</span>課</div>
<div class="t" style="left:603px;top:256.3px;font-size:12px;line-height:16px;color:#333;">今西 孝吉</div>
<div class="t" style="left:706px;top:256.3px;font-size:12px;line-height:16px;color:#333;"><span class="a">2025/09/28 13:24</span></div>
<div class="t" style="left:809px;top:256.3px;font-size:12px;line-height:16px;color:#333;">承認済</div>
<div class="t" style="left:864px;top:256.3px;font-size:12px;line-height:16px;color:#333;"><span class="a">IT</span>機器貸与（本社）</div>
<div class="b" style="left:10px;top:322px;width:1241px;height:1px;background:#dcdcdc"></div>
<div class="b" style="left:10px;top:290px;width:1px;height:32px;background:#dcdcdc"></div>
<div class="b" style="left:53px;top:290px;width:1px;height:32px;background:#dcdcdc"></div>
<div class="b" style="left:84px;top:290px;width:1px;height:32px;background:#dcdcdc"></div>
<div class="b" style="left:115px;top:290px;width:1px;height:32px;background:#dcdcdc"></div>
<div class="b" style="left:218px;top:290px;width:1px;height:32px;background:#dcdcdc"></div>
<div class="b" style="left:297px;top:290px;width:1px;height:32px;background:#dcdcdc"></div>
<div class="b" style="left:448px;top:290px;width:1px;height:32px;background:#dcdcdc"></div>
<div class="b" style="left:599px;top:290px;width:1px;height:32px;background:#dcdcdc"></div>
<div class="b" style="left:702px;top:290px;width:1px;height:32px;background:#dcdcdc"></div>
<div class="b" style="left:805px;top:290px;width:1px;height:32px;background:#dcdcdc"></div>
<div class="b" style="left:860px;top:290px;width:1px;height:32px;background:#dcdcdc"></div>
<div class="b" style="left:987px;top:290px;width:1px;height:32px;background:#dcdcdc"></div>
<div class="b" style="left:1090px;top:290px;width:1px;height:32px;background:#dcdcdc"></div>
<div class="b" style="left:1169px;top:290px;width:1px;height:32px;background:#dcdcdc"></div>
<div class="b" style="left:1273px;top:290px;width:1px;height:32px;background:#dcdcdc"></div>
<div class="t" style="right:1191px;top:298.8px;font-size:12px;line-height:16px;color:#333;"><span class="a">8</span></div>
<div class="t" style="left:119px;top:299.8px;font-size:12px;line-height:16px;color:#0b6dc6;text-decoration:underline;letter-spacing:-0.4px;">R000069</div>
<div class="t" style="left:222px;top:290.8px;font-size:12px;line-height:16px;color:#333;">棚卸<span class="k" style="transform:scaleX(0.860);letter-spacing:-0.093em;margin-right:-0.508em">グループ</span></div>
<div class="t" style="left:222px;top:306.8px;font-size:12px;line-height:16px;color:#333;">完了申請</div>
<div class="t" style="left:301px;top:298.8px;font-size:12px;line-height:16px;color:#333;">関東事業所棚卸完了申請</div>
<div class="t" style="left:603px;top:298.8px;font-size:12px;line-height:16px;color:#333;"><span class="k" style="transform:scaleX(0.860);letter-spacing:-0.093em;margin-right:-0.508em">システム</span>管理者</div>
<div class="t" style="left:706px;top:298.8px;font-size:12px;line-height:16px;color:#333;"><span class="a">2025/09/28 12:55</span></div>
<div class="t" style="left:809px;top:298.8px;font-size:12px;line-height:16px;color:#333;">承認済</div>
<div class="t" style="left:864px;top:298.8px;font-size:12px;line-height:16px;color:#333;">棚卸（関東事業所）</div>
<div class="t" style="left:991px;top:298.8px;font-size:12px;line-height:16px;color:#333;">情報<span class="k" style="transform:scaleX(0.860);letter-spacing:-0.093em;margin-right:-0.508em">システム</span>担当</div>
<div class="t" style="left:1094px;top:298.8px;font-size:12px;line-height:16px;color:#333;">承認者</div>
<div class="t" style="left:1173px;top:298.8px;font-size:12px;line-height:16px;color:#333;">塩見 伸也</div>
<div class="b" style="left:10px;top:355px;width:1241px;height:1px;background:#dcdcdc"></div>
<div class="b" style="left:10px;top:322px;width:1px;height:33px;background:#dcdcdc"></div>
<div class="b" style="left:53px;top:322px;width:1px;height:33px;background:#dcdcdc"></div>
<div class="b" style="left:84px;top:322px;width:1px;height:33px;background:#dcdcdc"></div>
<div class="b" style="left:115px;top:322px;width:1px;height:33px;background:#dcdcdc"></div>
<div class="b" style="left:218px;top:322px;width:1px;height:33px;background:#dcdcdc"></div>
<div class="b" style="left:297px;top:322px;width:1px;height:33px;background:#dcdcdc"></div>
<div class="b" style="left:448px;top:322px;width:1px;height:33px;background:#dcdcdc"></div>
<div class="b" style="left:599px;top:322px;width:1px;height:33px;background:#dcdcdc"></div>
<div class="b" style="left:702px;top:322px;width:1px;height:33px;background:#dcdcdc"></div>
<div class="b" style="left:805px;top:322px;width:1px;height:33px;background:#dcdcdc"></div>
<div class="b" style="left:860px;top:322px;width:1px;height:33px;background:#dcdcdc"></div>
<div class="b" style="left:987px;top:322px;width:1px;height:33px;background:#dcdcdc"></div>
<div class="b" style="left:1090px;top:322px;width:1px;height:33px;background:#dcdcdc"></div>
<div class="b" style="left:1169px;top:322px;width:1px;height:33px;background:#dcdcdc"></div>
<div class="b" style="left:1273px;top:322px;width:1px;height:33px;background:#dcdcdc"></div>
<div class="t" style="right:1191px;top:331.3px;font-size:12px;line-height:16px;color:#333;"><span class="a">9</span></div>
<div class="t" style="left:119px;top:332.3px;font-size:12px;line-height:16px;color:#0b6dc6;text-decoration:underline;letter-spacing:-0.4px;">R000068</div>
<div class="t" style="left:222px;top:323.3px;font-size:12px;line-height:16px;color:#333;">棚卸<span class="k" style="transform:scaleX(0.860);letter-spacing:-0.093em;margin-right:-0.508em">グループ</span></div>
<div class="t" style="left:222px;top:339.3px;font-size:12px;line-height:16px;color:#333;">完了申請</div>
<div class="t" style="left:301px;top:331.3px;font-size:12px;line-height:16px;color:#333;">東北事業所棚卸完了申請</div>
<div class="t" style="left:603px;top:331.3px;font-size:12px;line-height:16px;color:#333;"><span class="k" style="transform:scaleX(0.860);letter-spacing:-0.093em;margin-right:-0.508em">システム</span>管理者</div>
<div class="t" style="left:706px;top:331.3px;font-size:12px;line-height:16px;color:#333;"><span class="a">2025/09/28 10:41</span></div>
<div class="t" style="left:809px;top:331.3px;font-size:12px;line-height:16px;color:#333;">承認済</div>
<div class="t" style="left:864px;top:331.3px;font-size:12px;line-height:16px;color:#333;">棚卸（東北事業所）</div>
<div class="t" style="left:991px;top:331.3px;font-size:12px;line-height:16px;color:#333;">情報<span class="k" style="transform:scaleX(0.860);letter-spacing:-0.093em;margin-right:-0.508em">システム</span>担当</div>
<div class="t" style="left:1094px;top:331.3px;font-size:12px;line-height:16px;color:#333;">承認者</div>
<div class="t" style="left:1173px;top:331.3px;font-size:12px;line-height:16px;color:#333;">高橋 樹</div>
<div class="b" style="left:10px;top:388px;width:1241px;height:1px;background:#dcdcdc"></div>
<div class="b" style="left:10px;top:355px;width:1px;height:33px;background:#dcdcdc"></div>
<div class="b" style="left:53px;top:355px;width:1px;height:33px;background:#dcdcdc"></div>
<div class="b" style="left:84px;top:355px;width:1px;height:33px;background:#dcdcdc"></div>
<div class="b" style="left:115px;top:355px;width:1px;height:33px;background:#dcdcdc"></div>
<div class="b" style="left:218px;top:355px;width:1px;height:33px;background:#dcdcdc"></div>
<div class="b" style="left:297px;top:355px;width:1px;height:33px;background:#dcdcdc"></div>
<div class="b" style="left:448px;top:355px;width:1px;height:33px;background:#dcdcdc"></div>
<div class="b" style="left:599px;top:355px;width:1px;height:33px;background:#dcdcdc"></div>
<div class="b" style="left:702px;top:355px;width:1px;height:33px;background:#dcdcdc"></div>
<div class="b" style="left:805px;top:355px;width:1px;height:33px;background:#dcdcdc"></div>
<div class="b" style="left:860px;top:355px;width:1px;height:33px;background:#dcdcdc"></div>
<div class="b" style="left:987px;top:355px;width:1px;height:33px;background:#dcdcdc"></div>
<div class="b" style="left:1090px;top:355px;width:1px;height:33px;background:#dcdcdc"></div>
<div class="b" style="left:1169px;top:355px;width:1px;height:33px;background:#dcdcdc"></div>
<div class="b" style="left:1273px;top:355px;width:1px;height:33px;background:#dcdcdc"></div>
<div class="t" style="right:1191px;top:364.3px;font-size:12px;line-height:16px;color:#333;"><span class="a">10</span></div>
<div class="t" style="left:119px;top:365.3px;font-size:12px;line-height:16px;color:#0b6dc6;text-decoration:underline;letter-spacing:-0.4px;">R000067</div>
<div class="t" style="left:222px;top:356.3px;font-size:12px;line-height:16px;color:#333;"><span class="a">IT</span>機器<span class="k" style="transform:scaleX(0.860);letter-spacing:-0.047em;margin-right:-0.133em">の</span>利用</div>
<div class="t" style="left:222px;top:372.3px;font-size:12px;line-height:16px;color:#333;">申請</div>
<div class="t" style="left:301px;top:356.3px;font-size:12px;line-height:16px;color:#333;">押田 有紀子：業務用<span class="a">PC</span></div>
<div class="t" style="left:301px;top:372.3px;font-size:12px;line-height:16px;color:#333;">（申請中）</div>
<div class="t" style="left:603px;top:364.3px;font-size:12px;line-height:16px;color:#333;"><span class="k" style="transform:scaleX(0.860);letter-spacing:-0.093em;margin-right:-0.508em">システム</span>管理者</div>
<div class="t" style="left:706px;top:364.3px;font-size:12px;line-height:16px;color:#333;"><span class="a">2025/09/27 18:58</span></div>
<div class="t" style="left:809px;top:364.3px;font-size:12px;line-height:16px;color:#333;">未承認</div>
<div class="t" style="left:864px;top:364.3px;font-size:12px;line-height:16px;color:#333;"><span class="a">IT</span>機器貸与（本社）</div>
<div class="t" style="left:991px;top:364.3px;font-size:12px;line-height:16px;color:#333;">情報<span class="k" style="transform:scaleX(0.860);letter-spacing:-0.093em;margin-right:-0.508em">システム</span>担当</div>
<div class="t" style="left:1094px;top:364.3px;font-size:12px;line-height:16px;color:#333;">承認者</div>
<div class="t" style="left:1173px;top:364.3px;font-size:12px;line-height:16px;color:#333;">合田 加奈</div>
<div class="b" style="left:10px;top:437px;width:1241px;height:1px;background:#dcdcdc"></div>
<div class="b" style="left:10px;top:388px;width:1px;height:49px;background:#dcdcdc"></div>
<div class="b" style="left:53px;top:388px;width:1px;height:49px;background:#dcdcdc"></div>
<div class="b" style="left:84px;top:388px;width:1px;height:49px;background:#dcdcdc"></div>
<div class="b" style="left:115px;top:388px;width:1px;height:49px;background:#dcdcdc"></div>
<div class="b" style="left:218px;top:388px;width:1px;height:49px;background:#dcdcdc"></div>
<div class="b" style="left:297px;top:388px;width:1px;height:49px;background:#dcdcdc"></div>
<div class="b" style="left:448px;top:388px;width:1px;height:49px;background:#dcdcdc"></div>
<div class="b" style="left:599px;top:388px;width:1px;height:49px;background:#dcdcdc"></div>
<div class="b" style="left:702px;top:388px;width:1px;height:49px;background:#dcdcdc"></div>
<div class="b" style="left:805px;top:388px;width:1px;height:49px;background:#dcdcdc"></div>
<div class="b" style="left:860px;top:388px;width:1px;height:49px;background:#dcdcdc"></div>
<div class="b" style="left:987px;top:388px;width:1px;height:49px;background:#dcdcdc"></div>
<div class="b" style="left:1090px;top:388px;width:1px;height:49px;background:#dcdcdc"></div>
<div class="b" style="left:1169px;top:388px;width:1px;height:49px;background:#dcdcdc"></div>
<div class="b" style="left:1273px;top:388px;width:1px;height:49px;background:#dcdcdc"></div>
<div class="t" style="right:1191px;top:405.3px;font-size:12px;line-height:16px;color:#333;"><span class="a">11</span></div>
<div class="b" style="left:63px;top:406px;width:11px;height:11px;background:#fff;border:1px solid #6f6f6f;border-radius:2px"></div>
<div class="t" style="left:119px;top:406.3px;font-size:12px;line-height:16px;color:#0b6dc6;text-decoration:underline;letter-spacing:-0.4px;">R000066</div>
<div class="t" style="left:222px;top:397.3px;font-size:12px;line-height:16px;color:#333;"><span class="a">IT</span>機器<span class="k" style="transform:scaleX(0.860);letter-spacing:-0.047em;margin-right:-0.133em">の</span>利用</div>
<div class="t" style="left:222px;top:413.3px;font-size:12px;line-height:16px;color:#333;">申請</div>
<div class="t" style="left:301px;top:397.3px;font-size:12px;line-height:16px;color:#333;">伊藤 澪：業務用<span class="a">PC</span>（承認</div>
<div class="t" style="left:301px;top:413.3px;font-size:12px;line-height:16px;color:#333;">待<span class="k" style="transform:scaleX(0.860);letter-spacing:-0.047em;margin-right:-0.133em">ち</span>）</div>
<div class="t" style="left:452px;top:397.3px;font-size:12px;line-height:16px;color:#333;">本社<span class="a">.</span><span class="k" style="transform:scaleX(0.860);letter-spacing:-0.093em;margin-right:-0.635em">カスタマー</span>本部<span class="a">.</span><span class="k" style="transform:scaleX(0.860);letter-spacing:-0.093em;margin-right:-0.508em">システム</span></div>
<div class="t" style="left:452px;top:413.3px;font-size:12px;line-height:16px;color:#333;">支援部<span class="a">.</span><span class="k" style="transform:scaleX(0.860);letter-spacing:-0.093em;margin-right:-0.762em">プロジェクト</span>支援課</div>
<div class="t" style="left:603px;top:405.3px;font-size:12px;line-height:16px;color:#333;">高柳 幹男</div>
<div class="t" style="left:706px;top:405.3px;font-size:12px;line-height:16px;color:#333;"><span class="a">2025/09/27 16:17</span></div>
<div class="t" style="left:809px;top:405.3px;font-size:12px;line-height:16px;color:#333;">未承認</div>
<div class="t" style="left:864px;top:405.3px;font-size:12px;line-height:16px;color:#333;"><span class="a">IT</span>機器貸与（本社）</div>
<div class="t" style="left:991px;top:405.3px;font-size:12px;line-height:16px;color:#333;">情報<span class="k" style="transform:scaleX(0.860);letter-spacing:-0.093em;margin-right:-0.508em">システム</span>担当</div>
<div class="t" style="left:1094px;top:405.3px;font-size:12px;line-height:16px;color:#333;">承認者</div>
<div class="t" style="left:1173px;top:405.3px;font-size:12px;line-height:16px;color:#333;">合田 加奈</div>
<div class="b" style="left:10px;top:486px;width:1241px;height:1px;background:#dcdcdc"></div>
<div class="b" style="left:10px;top:437px;width:1px;height:49px;background:#dcdcdc"></div>
<div class="b" style="left:53px;top:437px;width:1px;height:49px;background:#dcdcdc"></div>
<div class="b" style="left:84px;top:437px;width:1px;height:49px;background:#dcdcdc"></div>
<div class="b" style="left:115px;top:437px;width:1px;height:49px;background:#dcdcdc"></div>
<div class="b" style="left:218px;top:437px;width:1px;height:49px;background:#dcdcdc"></div>
<div class="b" style="left:297px;top:437px;width:1px;height:49px;background:#dcdcdc"></div>
<div class="b" style="left:448px;top:437px;width:1px;height:49px;background:#dcdcdc"></div>
<div class="b" style="left:599px;top:437px;width:1px;height:49px;background:#dcdcdc"></div>
<div class="b" style="left:702px;top:437px;width:1px;height:49px;background:#dcdcdc"></div>
<div class="b" style="left:805px;top:437px;width:1px;height:49px;background:#dcdcdc"></div>
<div class="b" style="left:860px;top:437px;width:1px;height:49px;background:#dcdcdc"></div>
<div class="b" style="left:987px;top:437px;width:1px;height:49px;background:#dcdcdc"></div>
<div class="b" style="left:1090px;top:437px;width:1px;height:49px;background:#dcdcdc"></div>
<div class="b" style="left:1169px;top:437px;width:1px;height:49px;background:#dcdcdc"></div>
<div class="b" style="left:1273px;top:437px;width:1px;height:49px;background:#dcdcdc"></div>
<div class="t" style="right:1191px;top:454.3px;font-size:12px;line-height:16px;color:#333;"><span class="a">12</span></div>
<div class="t" style="left:119px;top:455.3px;font-size:12px;line-height:16px;color:#0b6dc6;text-decoration:underline;letter-spacing:-0.4px;">R000065</div>
<div class="t" style="left:222px;top:446.3px;font-size:12px;line-height:16px;color:#333;"><span class="a">IT</span>機器<span class="k" style="transform:scaleX(0.860);letter-spacing:-0.047em;margin-right:-0.133em">の</span>返却</div>
<div class="t" style="left:222px;top:462.3px;font-size:12px;line-height:16px;color:#333;">申請</div>
<div class="t" style="left:301px;top:446.3px;font-size:12px;line-height:16px;color:#333;">新<span class="k" style="transform:scaleX(0.860);letter-spacing:-0.047em;margin-right:-0.267em">しい</span><span class="a">PC</span><span class="k" style="transform:scaleX(0.860);letter-spacing:-0.047em;margin-right:-0.133em">と</span>入<span class="k" style="transform:scaleX(0.860);letter-spacing:-0.047em;margin-right:-0.133em">れ</span>替<span class="k" style="transform:scaleX(0.860);letter-spacing:-0.047em;margin-right:-0.534em">えのため</span>、</div>
<div class="t" style="left:301px;top:462.3px;font-size:12px;line-height:16px;color:#333;">返却（承認済<span class="k" style="transform:scaleX(0.860);letter-spacing:-0.047em;margin-right:-0.133em">み</span>）</div>
<div class="t" style="left:452px;top:446.3px;font-size:12px;line-height:16px;color:#333;">本社<span class="a">.</span>営業統括本部<span class="a">.</span>第一営</div>
<div class="t" style="left:452px;top:462.3px;font-size:12px;line-height:16px;color:#333;">業部<span class="a">.</span>営業第<span class="a">5</span>課</div>
<div class="t" style="left:603px;top:454.3px;font-size:12px;line-height:16px;color:#333;">今西 孝吉</div>
<div class="t" style="left:706px;top:454.3px;font-size:12px;line-height:16px;color:#333;"><span class="a">2025/09/25 13:27</span></div>
<div class="t" style="left:809px;top:454.3px;font-size:12px;line-height:16px;color:#333;">差戻</div>
<div class="t" style="left:864px;top:454.3px;font-size:12px;line-height:16px;color:#333;"><span class="a">IT</span>機器返却（本社）</div>
<div class="t" style="left:991px;top:454.3px;font-size:12px;line-height:16px;color:#333;">情報<span class="k" style="transform:scaleX(0.860);letter-spacing:-0.093em;margin-right:-0.508em">システム</span>担当</div>
<div class="t" style="left:1094px;top:454.3px;font-size:12px;line-height:16px;color:#333;">承認者</div>
<div class="t" style="left:1173px;top:454.3px;font-size:12px;line-height:16px;color:#333;">合田 加奈</div>
</div>
<div class="b" style="left:0px;top:808px;width:1241px;height:1px;background:#9a9a9a"></div>
<svg class="s" style="left:9px;top:828px;" width="64" height="17" viewBox="0 0 64 17"><defs><linearGradient id="pg" x1="0" y1="0" x2="1" y2="0"><stop offset="0" stop-color="#2f6db5"/><stop offset="1" stop-color="#4a8ad0"/></linearGradient>
<linearGradient id="pg2" x1="0" y1="0" x2="1" y2="0"><stop offset="0" stop-color="#4a8ad0"/><stop offset="1" stop-color="#2a5f9e"/></linearGradient></defs>
<path d="M1 8.5 L9 0.8 V16.2 Z M9 8.5 L17 0.8 V16.2 Z" fill="url(#pg)"/>
<path d="M45 0.8 L53 8.5 L45 16.2 Z M53 0.8 L61 8.5 L53 16.2 Z" fill="url(#pg2)"/></svg>
<div class="t" style="left:33px;top:829.8px;font-size:12px;line-height:16px;color:#1c78c6;"><span class="a">1-</span></div>
<div class="b" style="left:787px;top:814px;width:96px;height:29px;background:linear-gradient(#fdfdfd,#e9e9e9);border:1px solid #b9b9b9"></div>
<div class="t" style="left:787.0px;width:98px;text-align:center;top:822.3px;font-size:12px;line-height:16px;color:#222;">承認済<span class="k" style="transform:scaleX(0.860);letter-spacing:-0.047em;margin-right:-0.534em">みにする</span></div>
<div class="b" style="left:889px;top:814px;width:95px;height:29px;background:linear-gradient(#fdfdfd,#e9e9e9);border:1px solid #b9b9b9"></div>
<div class="t" style="left:889.0px;width:97px;text-align:center;top:822.3px;font-size:12px;line-height:16px;color:#222;">回覧済<span class="k" style="transform:scaleX(0.860);letter-spacing:-0.047em;margin-right:-0.534em">みにする</span></div>
<div class="b" style="left:0px;top:851px;width:1241px;height:3px;background:#1b1b1b"></div>
<div class="t" style="left:7px;top:854.3px;font-size:12px;line-height:16px;color:#555;"><span class="a">login: 2025/10/14 10:55:17</span> <span class="k" style="transform:scaleX(0.860);letter-spacing:-0.093em;margin-right:-0.508em">システム</span>管理者</div>
<div class="t" style="right:5px;top:854.8px;font-size:12px;line-height:16px;color:#555;letter-spacing:-0.162px;"><span class="a">Assetment Neo Ver.2.17.0 Copyright(C) Assetment CORP. All rights reserved.</span></div>
<div class="b" style="left:0px;top:870px;width:1241px;height:15px;background:#f8f8f8"></div>
<svg class="s" style="left:4px;top:872px;" width="10" height="11" viewBox="0 0 10 11"><path d="M8 1 V10 L2 5.5 Z" fill="#8c8c8c"/></svg>
<div class="b" style="left:18px;top:873px;width:968px;height:9px;background:#8b8b8b;border-radius:4.5px"></div>
<svg class="s" style="left:1227px;top:872px;" width="10" height="11" viewBox="0 0 10 11"><path d="M2 1 V10 L8 5.5 Z" fill="#8c8c8c"/></svg>
<div class="b" style="left:0px;top:884px;width:1241px;height:2px;background:#3c3c3c"></div>
</body></html>
